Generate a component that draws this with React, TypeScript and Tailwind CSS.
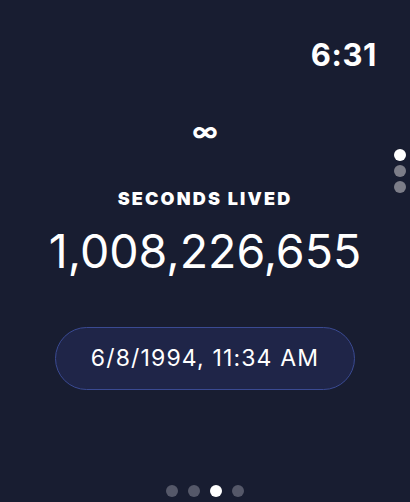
import React from 'react';

function PageDots({ count, active, vertical }: { count: number; active: number; vertical?: boolean }) {
  return (
    <div className={vertical ? 'flex flex-col gap-[4px]' : 'flex gap-[10px]'}>
      {Array.from({ length: count }).map((_, i) => (
        <div
          key={i}
          className={`h-[12px] w-[12px] rounded-full ${i === active ? 'bg-white' : vertical ? 'bg-[#7c7d88]' : 'bg-[#555869]'}`}
        />
      ))}
    </div>
  );
}

export default function App() {
  return (
    <div className="relative flex h-[502px] w-[410px] flex-col overflow-hidden bg-[#181d31] text-white [font-family:Inter,'Liberation_Sans',sans-serif]">
      <div className="flex justify-end pr-[33px] pt-[38px]">
        <span className="text-[31px] font-bold leading-[34px] tracking-[0.02em]">6:31</span>
      </div>

      <div className="mt-[45px] flex justify-center">
        <span className="text-[26px] font-bold leading-[30px]">∞</span>
      </div>

      <div className="mt-[42px] flex flex-col items-center">
        <div className="text-[18px] font-black leading-[20px] tracking-[0.12em]">SECONDS LIVED</div>
        <div className="mt-[14px] text-[46.5px] font-normal leading-[56px]">1,008,226,655</div>
      </div>

      <div className="mt-[48px] flex justify-center">
        <div className="flex h-[63px] w-[300px] items-center justify-center rounded-full border border-[#3a4a92] bg-[#1f2548] text-[23px] leading-none tracking-[0.05em]">
          6/8/1994, 11:34 AM
        </div>
      </div>

      <div className="absolute right-[4px] top-[149px]">
        <PageDots count={3} active={0} vertical />
      </div>
      <div className="absolute bottom-[5px] left-0 right-0 flex justify-center">
        <PageDots count={4} active={2} />
      </div>
    </div>
  );
}
